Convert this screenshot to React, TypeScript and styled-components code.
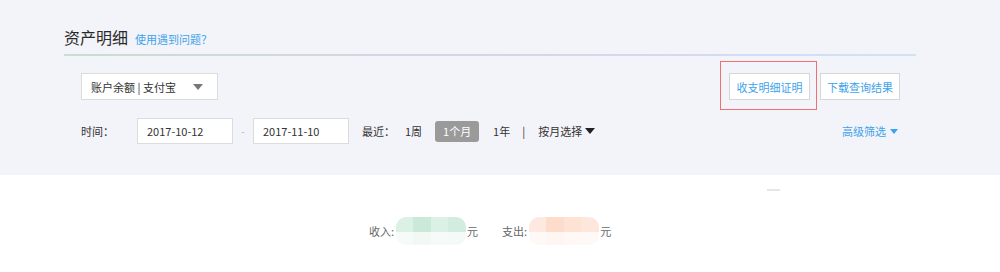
import React from 'react';
import styled, { createGlobalStyle } from 'styled-components';

const GlobalStyle = createGlobalStyle`
  html, body {
    margin: 0;
    padding: 0;
    background: #ffffff;
    font-family: "Noto Sans CJK SC", "Liberation Sans", sans-serif;
    font-size: 11px;
    color: #333;
  }
`;

const Panel = styled.div`
  background: #f3f4f9;
  height: 175px;
  padding-left: 64px;
  box-sizing: border-box;
`;

const Inner = styled.div`
  width: 852px;
`;

const Header = styled.div`
  display: flex;
  align-items: baseline;
  gap: 7px;
  height: 54px;
  padding-top: 26px;
  box-sizing: border-box;
`;

const Title = styled.h2`
  margin: 0;
  font-size: 16px;
  font-weight: 400;
  color: #2a2a2a;
  line-height: 22px;
`;

const HelpLink = styled.a`
  color: #3ea3ea;
  font-size: 11px;
  text-decoration: none;
`;

const Divider = styled.div`
  height: 2px;
  background: linear-gradient(to right, #c9ddd0, #d9d3ec 55%, #cfe3f7);
`;

const Controls = styled.div`
  padding: 0 16px 0 17px;
`;

const Row = styled.div<{ $top: number }>`
  display: flex;
  align-items: center;
  margin-top: ${p => p.$top}px;
`;

const Select = styled.div`
  display: flex;
  align-items: center;
  justify-content: space-between;
  width: 137px;
  height: 27px;
  box-sizing: border-box;
  padding: 0 14px 0 9px;
  background: #fff;
  border: 1px solid #dcdcdc;
  color: #333;
`;

const Caret = styled.span<{ $color?: string; $size?: number }>`
  display: inline-block;
  width: 0;
  height: 0;
  border-left: ${p => p.$size ?? 5}px solid transparent;
  border-right: ${p => p.$size ?? 5}px solid transparent;
  border-top: ${p => (p.$size ?? 5) + 1}px solid ${p => p.$color ?? '#666'};
`;

const Spacer = styled.div`
  flex: 1;
`;

const Gap = styled.span<{ $w: number }>`
  display: inline-block;
  width: ${p => p.$w}px;
  flex: none;
`;

const Highlight = styled.span`
  position: relative;
  display: inline-flex;

  &::after {
    content: '';
    position: absolute;
    top: -12px;
    bottom: -10px;
    left: -9px;
    right: -7px;
    border: 1px solid #ef6f72;
    pointer-events: none;
  }
`;

const OutlineButton = styled.button<{ $w: number }>`
  width: ${p => p.$w}px;
  height: 27px;
  padding: 0;
  background: #fff;
  border: 1px solid #d6d6d6;
  color: #3ea3ea;
  font-family: inherit;
  font-size: 11px;
  cursor: pointer;
`;

const ButtonGroup = styled.div`
  display: flex;
  gap: 10px;
`;

const Label = styled.span<{ $width?: number }>`
  display: inline-block;
  width: ${p => (p.$width ? `${p.$width}px` : 'auto')};
  color: #333;
`;

const DateInput = styled.div`
  width: 96px;
  height: 26px;
  box-sizing: border-box;
  padding-left: 9px;
  display: flex;
  align-items: center;
  background: #fff;
  border: 1px solid #dcdcdc;
  color: #333;
`;

const Dash = styled.span`
  width: 20px;
  text-align: center;
  color: #bbb;
`;

const RangeItem = styled.span<{ $active?: boolean }>`
  display: inline-flex;
  align-items: center;
  justify-content: center;
  height: 21px;
  min-width: ${p => (p.$active ? 44 : 0)}px;
  border-radius: 3px;
  background: ${p => (p.$active ? '#9a9a9a' : 'transparent')};
  color: ${p => (p.$active ? '#fff' : '#333')};
`;

const Sep = styled.span`
  color: #333;
`;

const MonthPick = styled.span`
  display: inline-flex;
  align-items: center;
  gap: 3px;
  color: #333;
`;

const Advanced = styled.span`
  display: inline-flex;
  align-items: center;
  gap: 4px;
  margin-right: 2px;
  color: #3ea3ea;
`;

const Body = styled.div`
  height: 97px;
  padding-top: 14px;
  box-sizing: border-box;
  overflow: hidden;
`;

const Tick = styled.div`
  margin-left: 767px;
  width: 13px;
  height: 2px;
  background: #e6e6e6;
`;

const Stats = styled.div`
  display: flex;
  align-items: center;
  padding-left: 369px;
  margin-top: 26px;
  color: #666;
`;

const Pill = styled.span<{ $tone: 'green' | 'orange' }>`
  display: inline-block;
  width: 70px;
  height: 28px;
  border-radius: 10px;
  margin: 0 1px 0 2px;
  background:
    linear-gradient(to bottom, transparent 55%, rgba(255, 255, 255, 0.75) 55%),
    ${p =>
      p.$tone === 'green'
        ? 'linear-gradient(to right, #dcf1e6 0 25%, #cbe9d9 25% 50%, #dcf1e6 50% 75%, #d2ecdf 75%)'
        : 'linear-gradient(to right, #fde9df 0 25%, #fddccb 25% 50%, #fee3d5 50% 75%, #fde7dc 75%)'};
`;

const Unit = styled.span<{ $gap?: number }>`
  margin-right: ${p => p.$gap ?? 0}px;
  color: #666;
`;

export default function App() {
  return (
    <>
      <GlobalStyle />
      <Panel>
        <Inner>
          <Header>
            <Title>资产明细</Title>
            <HelpLink href="#">使用遇到问题？</HelpLink>
          </Header>
          <Divider />
          <Controls>
            <Row $top={17}>
              <Select>
                <span>账户余额 | 支付宝</span>
                <Caret $color="#777" />
              </Select>
              <Spacer />
              <ButtonGroup>
                <Highlight>
                  <OutlineButton $w={81}>收支明细证明</OutlineButton>
                </Highlight>
                <OutlineButton $w={80}>下载查询结果</OutlineButton>
              </ButtonGroup>
            </Row>
            <Row $top={18}>
              <Label $width={56}>时间：</Label>
              <DateInput>2017-10-12</DateInput>
              <Dash>-</Dash>
              <DateInput>2017-11-10</DateInput>
              <Gap $w={13} />
              <Label>最近：</Label>
              <Gap $w={10} />
              <RangeItem>1周</RangeItem>
              <Gap $w={13} />
              <RangeItem $active>1个月</RangeItem>
              <Gap $w={14} />
              <RangeItem>1年</RangeItem>
              <Gap $w={12} />
              <Sep>|</Sep>
              <Gap $w={13} />
              <MonthPick>
                按月选择
                <Caret $color="#222" $size={5} />
              </MonthPick>
              <Spacer />
              <Advanced>
                高级筛选
                <Caret $color="#3ea3ea" $size={4} />
              </Advanced>
            </Row>
          </Controls>
        </Inner>
      </Panel>
      <Body>
        <Tick />
        <Stats>
          <span>收入:</span>
          <Pill $tone="green" />
          <Unit $gap={24}>元</Unit>
          <span>支出:</span>
          <Pill $tone="orange" />
          <Unit>元</Unit>
        </Stats>
      </Body>
    </>
  );
}
